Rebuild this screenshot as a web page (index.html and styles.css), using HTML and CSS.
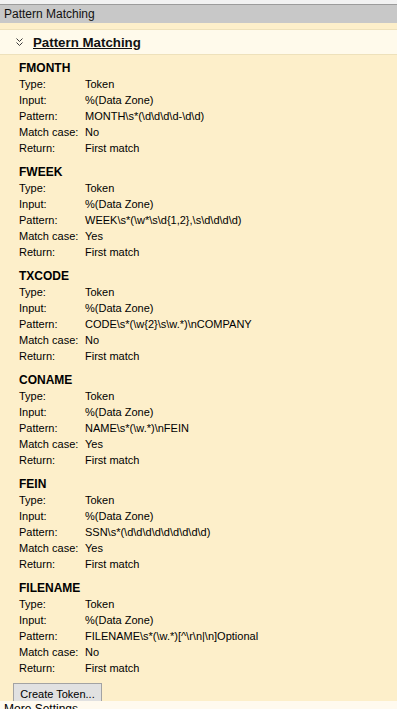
FILE: index.html
```html
<!DOCTYPE html>
<html>
<head>
<meta charset="utf-8">
<link rel="stylesheet" href="styles.css">
</head>
<body>
<div class="app">
  <div class="top-strip"></div>
  <div class="titlebar">Pattern Matching</div>
  <div class="panel">
    <div class="section-header">
      <svg class="chevron" width="7" height="9" viewBox="0 0 7 9"><polyline points="0.5,0.5 3.5,3.5 6.5,0.5" fill="none" stroke="#3a3a3a" stroke-width="1"/><polyline points="0.5,4.5 3.5,7.5 6.5,4.5" fill="none" stroke="#3a3a3a" stroke-width="1"/></svg>
      <span class="section-title">Pattern Matching</span>
    </div>
    <div class="tokens">
      <div class="token">
        <div class="token-name">FMONTH</div>
        <div class="row"><span class="label">Type:</span><span>Token</span></div>
        <div class="row"><span class="label">Input:</span><span>%(Data Zone)</span></div>
        <div class="row"><span class="label">Pattern:</span><span>MONTH\s*(\d\d\d\d-\d\d)</span></div>
        <div class="row"><span class="label">Match case:</span><span>No</span></div>
        <div class="row"><span class="label">Return:</span><span>First match</span></div>
      </div>
      <div class="token">
        <div class="token-name">FWEEK</div>
        <div class="row"><span class="label">Type:</span><span>Token</span></div>
        <div class="row"><span class="label">Input:</span><span>%(Data Zone)</span></div>
        <div class="row"><span class="label">Pattern:</span><span>WEEK\s*(\w*\s\d{1,2},\s\d\d\d\d)</span></div>
        <div class="row"><span class="label">Match case:</span><span>Yes</span></div>
        <div class="row"><span class="label">Return:</span><span>First match</span></div>
      </div>
      <div class="token">
        <div class="token-name">TXCODE</div>
        <div class="row"><span class="label">Type:</span><span>Token</span></div>
        <div class="row"><span class="label">Input:</span><span>%(Data Zone)</span></div>
        <div class="row"><span class="label">Pattern:</span><span>CODE\s*(\w{2}\s\w.*)\nCOMPANY</span></div>
        <div class="row"><span class="label">Match case:</span><span>No</span></div>
        <div class="row"><span class="label">Return:</span><span>First match</span></div>
      </div>
      <div class="token">
        <div class="token-name">CONAME</div>
        <div class="row"><span class="label">Type:</span><span>Token</span></div>
        <div class="row"><span class="label">Input:</span><span>%(Data Zone)</span></div>
        <div class="row"><span class="label">Pattern:</span><span>NAME\s*(\w.*)\nFEIN</span></div>
        <div class="row"><span class="label">Match case:</span><span>Yes</span></div>
        <div class="row"><span class="label">Return:</span><span>First match</span></div>
      </div>
      <div class="token">
        <div class="token-name">FEIN</div>
        <div class="row"><span class="label">Type:</span><span>Token</span></div>
        <div class="row"><span class="label">Input:</span><span>%(Data Zone)</span></div>
        <div class="row"><span class="label">Pattern:</span><span>SSN\s*(\d\d\d\d\d\d\d\d\d)</span></div>
        <div class="row"><span class="label">Match case:</span><span>Yes</span></div>
        <div class="row"><span class="label">Return:</span><span>First match</span></div>
      </div>
      <div class="token">
        <div class="token-name">FILENAME</div>
        <div class="row"><span class="label">Type:</span><span>Token</span></div>
        <div class="row"><span class="label">Input:</span><span>%(Data Zone)</span></div>
        <div class="row"><span class="label">Pattern:</span><span>FILENAME\s*(\w.*)[^\r\n|\n]Optional</span></div>
        <div class="row"><span class="label">Match case:</span><span>No</span></div>
        <div class="row"><span class="label">Return:</span><span>First match</span></div>
      </div>
    </div>
    <div class="actions">
      <button class="btn">Create Token...</button>
    </div>
  </div>
  <div class="bottom-strip">More Settings</div>
</div>
</body>
</html>
```

FILE: styles.css
```css
html, body {
  margin: 0;
  padding: 0;
}
body {
  font-family: "Liberation Sans", Arial, sans-serif;
  color: #000;
  background: #fdefca;
}
.app {
  height: 709px;
  display: flex;
  flex-direction: column;
  overflow: hidden;
}
.top-strip {
  height: 4px;
  background: #f2f2f2;
  flex: none;
}
.titlebar {
  flex: none;
  height: 18px;
  border-top: 1px solid #9c9c9c;
  background: #c8c8c8;
  font-size: 12px;
  line-height: 18px;
  padding-left: 4px;
  color: #111;
}
.panel {
  flex: 1;
  min-height: 0;
  overflow: hidden;
  background: #fdefca;
  padding-top: 6px;
}
.section-header {
  height: 24px;
  border-top: 1px solid #eee1bb;
  border-bottom: 1px solid #eee1bb;
  background: #fffaeb;
  display: flex;
  align-items: center;
  padding-left: 16px;
}
.chevron {
  display: block;
  margin-top: 1px;
}
.section-title {
  margin-left: 10px;
  font-weight: bold;
  font-size: 13.3px;
  text-decoration: underline;
  color: #111;
}
.tokens {
  display: flex;
  flex-direction: column;
  gap: 9px;
  padding: 6px 0 0 19px;
}
.token-name {
  font-weight: bold;
  font-size: 12px;
  line-height: 15px;
}
.row {
  display: grid;
  grid-template-columns: 66px auto;
  font-size: 11px;
  line-height: 16px;
  white-space: nowrap;
}
.actions {
  padding: 7px 0 0 13px;
}
.btn {
  font-family: "Liberation Sans", Arial, sans-serif;
  font-size: 11px;
  width: 89px;
  height: 21px;
  padding: 0;
  margin: 0;
  border: 1px solid #a3a3a3;
  background: #e1e1e1;
  color: #000;
}
.bottom-strip {
  flex: none;
  height: 8px;
  overflow: hidden;
  background: #fffaef;
  font-size: 12px;
  line-height: 15px;
  padding: 1px 0 0 4px;
  box-sizing: border-box;
}
```
